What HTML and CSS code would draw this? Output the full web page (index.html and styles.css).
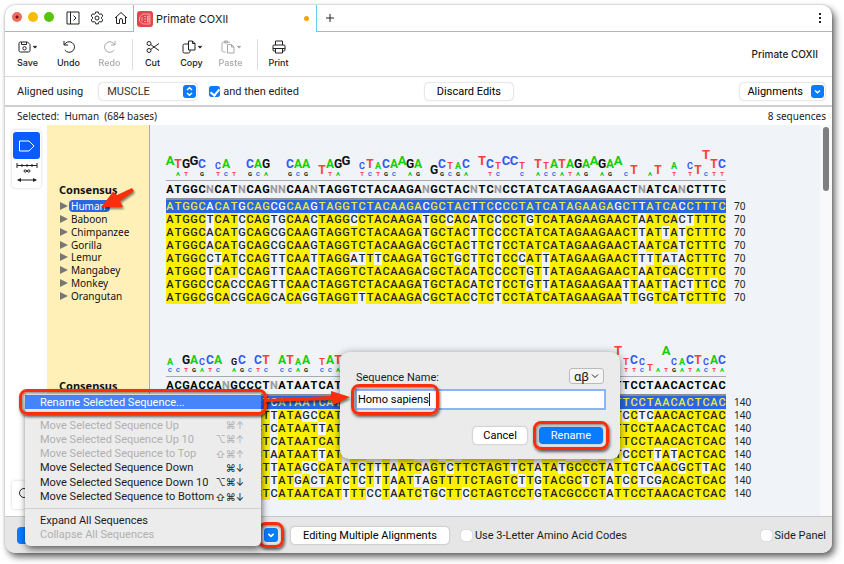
FILE: index.html
```html
<!DOCTYPE html>
<html lang="en">

<head>
    <meta charset="UTF-8">
    <meta name="viewport" content="width=device-width, initial-scale=1.0">
    <title>Primate COXII</title>
    <link rel="stylesheet" href="styles.css">
</head>

<body>
    <div class="window">
        <header class="tabs">
            <div class="lights"><i class="red"></i><i class="yellow"></i><i class="green"></i></div>
            <button class="icon_btn" aria-label="Toggle sidebar">
                <svg width="14" height="14" viewBox="0 0 14 14"><path d="M1 1h12v12H1zM4.500 1v12M7.500 4.500l2.500 2.500-2.500 2.500" /></svg>
            </button>
            <button class="icon_btn" aria-label="Settings">
                <svg width="14" height="14" viewBox="0 0 14 14"><path d="M5.700 1h2.600l.4 1.700 1.100.6 1.700-.5 1.300 2.200-1.300 1.200v1.500l1.300 1.200-1.300 2.200-1.700-.5-1.100.6-.4 1.700H5.700l-.4-1.700-1.100-.6-1.700.5-1.300-2.200 1.300-1.200V6.200L1.200 5l1.300-2.200 1.700.5 1.100-.6z" /><circle cx="7" cy="7" r="2" /></svg>
            </button>
            <button class="icon_btn" aria-label="Home">
                <svg width="14" height="14" viewBox="0 0 14 14"><path d="M1 7l6-5.500L13 7M2.500 6v6.500h3V9a1.500 1.500 0 0 1 3 0v3.500h3V6" /></svg>
            </button>
            <div class="tab">
                <svg class="tab_logo" width="16" height="16" viewBox="0 0 16 16"><rect width="16" height="16" rx="3" fill="#e0474c" stroke="none" /><path d="M6 3h7v10H6L2.500 10V6zM7 5.500h2M7 8h2M7 10.500h2M5 6v4M10.500 5h1.500v6h-1.500zM10.500 8H12" fill="none" stroke="#ffb9b6" stroke-width=".8" /></svg>
                <span>Primate COXII</span>
                <i class="unsaved"></i>
            </div>
            <button class="icon_btn new_tab" aria-label="New tab">
                <svg width="10" height="10" viewBox="0 0 10 10"><path d="M5 1v8M1 5h8" /></svg>
            </button>
            <button class="icon_btn more" aria-label="More">
                <svg width="4" height="12" viewBox="0 0 4 12"><path class="solid" d="M1 1h2v2H1zM1 5h2v2H1zM1 9h2v2H1z" /></svg>
            </button>
        </header>

        <nav class="toolbar">
            <button class="tool">
                <svg width="22" height="16" viewBox="0 0 22 16"><path d="M3.500 3h7l2.500 2.500v6a1.500 1.500 0 0 1-1.500 1.500h-8A1.500 1.500 0 0 1 2 11.500v-7A1.500 1.500 0 0 1 3.500 3zM4.500 3v2.500h5V3" /><circle cx="7.500" cy="9.300" r="1.700" /><path class="caret" d="M16.500 7L18 8.500 19.500 7" /></svg>
                Save
            </button>
            <button class="tool">
                <svg width="16" height="16" viewBox="0 0 16 16"><path d="M3 2v4h4M3.300 6a5.300 5.300 0 1 1 .5 5" /></svg>
                Undo
            </button>
            <button class="tool" disabled>
                <svg width="16" height="16" viewBox="0 0 16 16"><path d="M13 2v4H9M12.700 6a5.300 5.300 0 1 0-.5 5" /></svg>
                Redo
            </button>
            <i class="divider"></i>
            <div class="edit_tools">
                <button class="tool">
                    <svg width="16" height="16" viewBox="0 0 16 16"><circle cx="4" cy="4.500" r="2" /><circle cx="4" cy="11.500" r="2" /><path d="M5.700 5.600L14 11.500M5.700 10.400L14 4.500" /></svg>
                    Cut
                </button>
                <button class="tool">
                    <svg width="22" height="16" viewBox="0 0 22 16"><path d="M7.500 2h4L14 4.500V11H7.500zM11.500 2v2.500H14M7.500 5H3.500A1.500 1.500 0 0 0 2 6.500v6A1.500 1.500 0 0 0 3.500 14h4A1.500 1.500 0 0 0 9 12.500V11" /><path class="caret" d="M17.500 7L19 8.500 20.500 7" /></svg>
                    Copy
                </button>
                <button class="tool" disabled>
                    <svg width="22" height="16" viewBox="0 0 22 16"><path d="M7.500 5.500h4L14 8v6H7.500zM11.500 5.500V8H14M5.500 13h-2A1.500 1.500 0 0 1 2 11.500v-7A1.500 1.500 0 0 1 3.500 3h5A1.500 1.500 0 0 1 10 4M4.500 2h3v2h-3z" /><path class="caret" d="M17.500 7L19 8.500 20.500 7" /></svg>
                    Paste
                </button>
            </div>
            <i class="divider"></i>
            <button class="tool">
                <svg width="16" height="16" viewBox="0 0 16 16"><path d="M4.500 6V2h7v4M4 12H3a1 1 0 0 1-1-1V7a1 1 0 0 1 1-1h10a1 1 0 0 1 1 1v4a1 1 0 0 1-1 1h-1M4.500 9.500h7V14h-7zM2 9.500h12" /></svg>
                Print
            </button>
            <span class="doc_name">Primate COXII</span>
        </nav>

        <div class="options">
            <label for="method">Aligned using</label>
            <div class="select_wrap">
                <select id="method">
                    <option>MUSCLE</option>
                </select>
                <svg class="blue_mark" width="13" height="13" viewBox="0 0 13 13"><rect width="13" height="13" rx="3" /><path d="M4 5l2.500-2.300L9 5M4 8l2.500 2.300L9 8" /></svg>
            </div>
            <label class="check"><input type="checkbox" checked>and then edited</label>
            <button class="push discard">Discard Edits</button>
            <button class="push align_btn">Alignments
                <svg class="blue_mark" width="13" height="13" viewBox="0 0 13 13"><rect width="13" height="13" rx="3" /><path d="M4 5.500l2.500 2.300L9 5.500" /></svg>
            </button>
        </div>

        <div class="status">
            <span>Selected:&nbsp; Human&nbsp; (684 bases)</span>
            <span>8 sequences</span>
        </div>

        <main class="viewer">
            <aside class="side">
                <div class="side_card">
                    <button class="side_btn active" aria-label="Annotations">
                        <svg width="18" height="14" viewBox="0 0 18 14"><path d="M1.500 2H11l5 5-5 5H1.500z" /></svg>
                    </button>
                    <button class="side_btn" aria-label="Wrap width">
                        <svg width="22" height="22" viewBox="0 0 22 22"><path d="M1 3.500h20M1 1v5M21 1v5M6 2v3M11 2v3M16 2v3M11 9c-1-1.500-3-1.500-3 0s2 1.500 3 0 3-1.500 3 0-2 1.500-3 0M2 18h18" /><path class="solid" d="M1 18l4-2v4zM21 18l-4-2v4z" /></svg>
                    </button>
                </div>
                <button class="search_btn" aria-label="Search">
                    <svg width="14" height="14" viewBox="0 0 14 14"><circle cx="6" cy="6" r="4.500" /><path d="M9.500 9.500L13 13" /></svg>
                </button>
            </aside>
            <div class="names" id="names"></div>
            <div class="sequences" id="sequences"></div>
            <div class="scroll_track"><div class="scroll_thumb"></div></div>
        </main>

        <footer class="footer">
            <button class="blue_push" aria-label="Sequence actions"></button>
            <button class="chevron_btn framed" aria-label="Open sequence menu">
                <svg class="blue_mark" width="14" height="14" viewBox="0 0 13 13"><rect width="13" height="13" rx="3" /><path d="M4 5.500l2.500 2.300L9 5.500" /></svg>
            </button>
            <button class="push editing">Editing Multiple Alignments</button>
            <label class="check"><input type="checkbox">Use 3-Letter Amino Acid Codes</label>
            <label class="check last"><input type="checkbox">Side Panel</label>
        </footer>

        <svg class="arrow name_arrow" width="36" height="24" viewBox="0 0 36 24"><path d="M33 2L18 9l-4-3L2 21l22 0-3-6L35 5z" /></svg>

        <div class="menu" role="menu">
            <button class="menu_item selected framed" role="menuitem">Rename Selected Sequence...</button>
            <div class="menu_group moves">
                <button class="menu_item" disabled>Move Selected Sequence Up<kbd>⌘↑</kbd></button>
                <button class="menu_item" disabled>Move Selected Sequence Up 10<kbd>⌥⌘↑</kbd></button>
                <button class="menu_item" disabled>Move Selected Sequence to Top<kbd>⇧⌘↑</kbd></button>
                <button class="menu_item">Move Selected Sequence Down<kbd>⌘↓</kbd></button>
                <button class="menu_item">Move Selected Sequence Down 10<kbd>⌥⌘↓</kbd></button>
                <button class="menu_item">Move Selected Sequence to Bottom<kbd>⇧⌘↓</kbd></button>
            </div>
            <hr>
            <div class="menu_group">
                <button class="menu_item">Expand All Sequences</button>
                <button class="menu_item" disabled>Collapse All Sequences</button>
            </div>
        </div>

        <div class="dialog" role="dialog">
            <div class="dialog_top">
                <label for="seqName">Sequence Name:</label>
                <button class="greek">αβ<svg width="8" height="6" viewBox="0 0 8 6"><path d="M1 1.500l3 3 3-3" /></svg></button>
            </div>
            <div class="field">
                <input type="text" id="seqName" value="Homo sapiens">
                <i class="field_mark"></i>
            </div>
            <div class="dialog_buttons">
                <button class="push">Cancel</button>
                <button class="push primary framed">Rename</button>
            </div>
        </div>

        <svg class="arrow menu_arrow" width="90" height="20" viewBox="0 0 90 20"><path d="M1 10l66-3V2l19 6-17 8-1-5L1 13z" /></svg>
    </div>

    <script>
        var names = ["Human", "Baboon", "Chimpanzee", "Gorilla", "Lemur", "Mangabey", "Monkey", "Orangutan"];

        // size: 0 nothing, 1 tiny, 2 small, 3 medium, 4 tall
        var blocks = [
            {
                end: 70,
                consensus: "ATGGCNCATNCAGNNCAANTAGGTCTACAAGANGCTACNTCNCCTATCATAGAAGAACTNATCANCTTTC",
                logo: "ATGGCNCATNCAGNNCAANTAGGTCTACAAGANGCTACNTCTCCTATTATAGAAGAACTNATCANCTTTC",
                under: "-AT-G-TCA-GCA--GCG--TA--TCTGC-AG--GCGA--TC--C-ACCATAG-AG-C--T--T-T-CTT",
                size: "4334302310" + "3330033303" + "3340232334" + "3303322304" + "3244203233" + "3334334130" + "1302023433",
                rows: [
                    "ATGGCACATGCAGCGCAAGTAGGTCTACAAGACGCTACTTCCCCTATCATAGAAGAGCTTATCACCTTTC",
                    "ATGGCTCATCCAGTGCAACTAGGCCTACAAGATGCCACATCCCCTGTCATAGAAGAACTAATCACTTTTC",
                    "ATGGCACATGCAGCGCAAGTAGGTCTACAAGATGCTACTTCCCCTATCATAGAAGAACTTATTATCTTTC",
                    "ATGGCACATGCAGCGCAAGTAGGTCTACAAGACGCTACTTCTCCTATCATAGAAGAACTAATCATCTTTC",
                    "ATGGCCTATCCAGTTCAATTAGGATTTCAAGATGCTGCTTCTCCCATTATAGAAGAACTTTTATACTTTC",
                    "ATGGCTCATCCAGTTCAACTAGGTCTACAAGACGCTACATCCCCTGTTATAGAAGAACTAATCACCTTTC",
                    "ATGGCCCACCCAGTTCAACTAGGTCTACAAGATGCTACATCTCCTGTTATAGAAGAATTAATTACTTTCC",
                    "ATGGCGCACGCAGCACAGGTAGGTTTACAAGACGCTACCTCTCCTATCATAGAAGAATTGGTCATCTTTC"
                ]
            },
            {
                end: 140,
                consensus: "ACGACCANGCCCTNATAATCATNTTTNTNATCNGTTTTCTAGTCCTNTACGCCCTNTTCCTAACACTCAC",
                logo: "ACGACCANGCCCTNATAATTATNTTTNTNATCNGTTTTCTAGTCCTNTACGCCCTNTTCCTAACACTCAC",
                under: "CTTGATC-AG-TC-CCAG-CCA----------------------------------CTTC--TGATACTA",
                size: "2133233023" + "1330332302" + "3304000000" + "0000000000" + "0000000000" + "0000004232" + "2142233233",
                rows: [
                    "ACGACCACGCCCTCATAATCATTTTCCTTATCTGCTTCCTAGTCCTGTATGCCCTTTTCCTAACACTCAC",
                    "ACGACCACACCCTTATAGCCATATTCCTAATCAGCTTTCTAGTCCTGTACGCCCTATCCTCAACACTCAC",
                    "ACGACCACGCCCTCATAATTATTTTCCTTATCTGCTTCCTAGTCCTGTATGCCCTTTTCCTAACACTCAC",
                    "ACGACCACGCCCTCATAATCATTTTCCTTATCTGCTTCCTAGTCCTGTACGCCCTTTTCCTAACACTCAC",
                    "ATGACCATACTCTAATAATTATTTTCCTAATTAGCTCTCTAGTTCTATACATCATCTCCCTTATACTCAC",
                    "ACGACCATGCCCTTATAGCCATATCTTTAATCAGTCTTCTAGTTCTATATGCCCTATTCTCAACGCTTAC",
                    "ACAACCATACTCTTATGACTATCTCTTTAATTAGTTTTCTAGTCTTGTACGCTCTATCCTCGACACTCAC",
                    "ACGACCACGCCCTCATAATCATTTTCCTAATCTGCTTCCTAGTCCTGTACGCCCTATTCCTAACACTCAC"
                ]
            }
        ];

        function logoHtml(block) {
            var html = "";
            for (var i = 0; i < block.logo.length; i++) {
                var size = block.size[i];
                html += "<span class='stack'>";
                if (size !== "0") {
                    html += "<b class='base_" + block.logo[i] + " size_" + size + "'>" + block.logo[i] + "</b>";
                }
                if (size > 1 && block.under[i] !== "-") {
                    html += "<b class='base_" + block.under[i] + " size_1'>" + block.under[i] + "</b>";
                }
                html += "</span>";
            }
            return html;
        }

        function cellsHtml(text, consensus) {
            var html = "";
            for (var i = 0; i < text.length; i++) {
                var cls = "";
                if (consensus[i] === "N") {
                    cls = "unknown";
                } else if (text[i] === consensus[i]) {
                    cls = "match";
                }
                html += "<span class='" + cls + "'>" + text[i] + "</span>";
            }
            return html;
        }

        var namesHtml = "";
        var seqHtml = "";
        blocks.forEach(function (block) {
            namesHtml += "<section class='name_block'><h2>Consensus</h2><ul>";
            seqHtml += "<section class='seq_block'><div class='logo'>" + logoHtml(block) + "</div>";
            seqHtml += "<div class='bases consensus'>" + cellsHtml(block.consensus, block.consensus) + "</div><div class='rows'>";
            names.forEach(function (name, i) {
                var selected = i === 0 ? " selected" : "";
                namesHtml += "<li class='name" + selected + "'><i></i><span>" + name + "</span></li>";
                seqHtml += "<div class='row" + selected + "'><div class='bases'>" + cellsHtml(block.rows[i], block.consensus) + "</div><em>" + block.end + "</em></div>";
            });
            namesHtml += "</ul></section>";
            seqHtml += "</div></section>";
        });
        document.getElementById("names").innerHTML = namesHtml;
        document.getElementById("sequences").innerHTML = seqHtml;
    </script>
</body>

</html>
```

FILE: styles.css
```css
* {
    box-sizing: border-box;
}

body {
    margin: 0;
    padding: 5px 12px 11px 5px;
    height: 100vh;
    background-color: white;
    font-family: Roboto, "Liberation Sans", sans-serif;
    font-size: 11px;
    color: #1c1c1c;
    overflow: hidden;
}

button {
    border: none;
    padding: 0;
    background: none;
    font: inherit;
    color: inherit;
}

svg {
    flex: none;
    fill: none;
    stroke: #222;
    stroke-width: 1;
}

svg .solid {
    fill: #222;
    stroke: none;
}

svg .caret {
    stroke-width: 1.5;
}

.window {
    position: relative;
    height: 100%;
    display: flex;
    flex-direction: column;
    background-color: white;
    border-radius: 10px;
    box-shadow: 0 0 2px rgba(0, 0, 0, 0.3), 3px 4px 7px rgba(0, 0, 0, 0.6);
}

/* tab strip */
.tabs {
    height: 27px;
    flex: none;
    display: flex;
    align-items: stretch;
    border-bottom: 1px solid #6ecbf5;
}

.lights {
    display: flex;
    align-items: center;
    gap: 6px;
    padding: 0 7px 3px 7px;
}

.lights i {
    width: 10px;
    height: 10px;
    border-radius: 50%;
}

.lights .red {
    background: radial-gradient(circle, #7a0f0b 1px, #ee6a5f 2px);
}

.lights .yellow {
    background-color: #f5bd05;
}

.lights .green {
    background-color: #57c50a;
}

.icon_btn {
    display: flex;
    align-items: center;
    padding: 0 5px;
}

.tab {
    width: 184px;
    display: flex;
    align-items: center;
    gap: 3px;
    margin: 0 0 -1px 0;
    padding: 0 7px 0 3px;
    background-color: white;
    border-left: 1px solid #6ecbf5;
    border-right: 1px solid #6ecbf5;
    font-family: Inter, "Liberation Sans", sans-serif;
}

.unsaved {
    width: 5px;
    height: 5px;
    margin-left: auto;
    border-radius: 50%;
    background-color: #f5a300;
}

.new_tab {
    padding: 0 8px;
}

.more {
    margin-left: auto;
    padding: 0 10px;
}

/* toolbar */
.toolbar {
    height: 45px;
    flex: none;
    display: flex;
    align-items: center;
    padding: 0 14px 0 2px;
    border-bottom: 1px solid #ddd;
    font-family: Inter, "Liberation Sans", sans-serif;
    font-weight: 500;
}

.tool {
    width: 41px;
    display: flex;
    flex-direction: column;
    align-items: center;
    gap: 2px;
    font-size: 9px;
    line-height: 12px;
}

.tool:disabled {
    opacity: 0.4;
}

.edit_tools {
    display: flex;
    padding-right: 5px;
}

.edit_tools .tool {
    width: 39px;
}

.divider {
    width: 1px;
    height: 31px;
    margin-left: 2px;
    background-color: #ddd;
}

.doc_name {
    margin-left: auto;
    font-size: 10px;
}

/* options row */
.options {
    height: 30px;
    flex: none;
    display: flex;
    align-items: center;
    padding: 0 7px 0 12px;
    border-bottom: 2px solid #cfcfcf;
}

.select_wrap {
    position: relative;
    margin: 0 12px 0 16px;
}

.select_wrap select {
    width: 98px;
    height: 17px;
    padding: 0 8px;
    appearance: none;
    border: none;
    border-radius: 4px;
    background-color: white;
    box-shadow: 0 0 2px rgba(0, 0, 0, 0.35);
    font: inherit;
    color: #333;
}

.select_wrap svg {
    position: absolute;
    right: 1px;
    top: 2px;
}

.blue_mark rect {
    fill: #087bff;
    stroke: none;
}

.blue_mark path {
    stroke: white;
    stroke-width: 1.5;
}

.check {
    display: flex;
    align-items: center;
    gap: 3px;
}

.check input {
    width: 11px;
    height: 11px;
    flex: none;
    margin: 0;
    appearance: none;
    border-radius: 3px;
    background-color: white;
    box-shadow: 0 0 1px rgba(0, 0, 0, 0.4);
}

.check input:checked {
    background-color: #087bff;
}

.check input:checked::before {
    content: "";
    display: block;
    width: 4px;
    height: 7px;
    margin: 1px 0 0 3px;
    border: solid white;
    border-width: 0 2px 2px 0;
    transform: rotate(40deg);
}

.push {
    height: 17px;
    padding: 0 12px;
    border-radius: 4px;
    background-color: white;
    box-shadow: 0 0 2px rgba(0, 0, 0, 0.35);
    color: black;
}

.discard {
    margin: 0 auto 0 126px;
}

.align_btn {
    display: flex;
    align-items: center;
    gap: 8px;
    padding: 0 1px 0 7px;
}

.status {
    height: 18px;
    flex: none;
    display: flex;
    align-items: center;
    justify-content: space-between;
    padding: 0 6px 0 12px;
    font-family: "Noto Sans", sans-serif;
    font-size: 10px;
}

/* alignment viewer */
.viewer {
    flex: 1;
    min-height: 0;
    display: flex;
    overflow: hidden;
    background-color: #f0f3f8;
}

.side {
    width: 42px;
    flex: none;
    display: flex;
    flex-direction: column;
    justify-content: space-between;
    padding: 5px 0 7px 7px;
    background-color: white;
}

.side_card {
    width: 29px;
    padding: 2px 1px;
    border-radius: 4px;
    box-shadow: 0 0 3px rgba(0, 0, 0, 0.2);
}

.side_btn {
    width: 27px;
    height: 27px;
    display: flex;
    align-items: center;
    justify-content: center;
}

.side_btn.active {
    border-radius: 3px;
    background-color: #0a5cff;
}

.side_btn.active svg {
    stroke: white;
}

.search_btn {
    width: 29px;
    height: 28px;
    padding: 4px 6px;
    text-align: left;
    border-radius: 3px;
    box-shadow: 0 0 3px rgba(0, 0, 0, 0.2);
}

.names {
    width: 103px;
    flex: none;
    background-color: #fff0b8;
    border-right: 1px solid #aaa;
    font-family: "Noto Sans", sans-serif;
    font-size: 10px;
    color: #111;
}

.name_block {
    height: 196px;
    padding: 56px 0 0 12px;
}

.name_block h2 {
    height: 19px;
    margin: 0;
    font-size: 11px;
    line-height: 17px;
}

.name_block ul {
    height: 102px;
    display: grid;
    grid-template-rows: repeat(8, 1fr);
    margin: 0;
    padding: 0;
    list-style: none;
}

.name {
    display: flex;
    align-items: center;
    gap: 1px;
    line-height: 12px;
}

.name i {
    margin-left: 1px;
    border-left: 8px solid #777;
    border-top: 4px solid transparent;
    border-bottom: 4px solid transparent;
}

.name span {
    padding: 0 2px;
}

.name.selected span {
    border-radius: 4px;
    background-color: #2a66df;
    color: white;
    padding-right: 4px;
}

.sequences {
    flex: 1;
    padding-left: 16px;
}

.seq_block {
    height: 196px;
}

.logo {
    width: 560px;
    height: 56px;
    display: flex;
    padding-bottom: 3px;
    border-bottom: 1px solid #aaa;
}

.stack {
    width: 8px;
    display: flex;
    flex-direction: column;
    justify-content: flex-end;
    align-items: center;
}

.size_1 {
    font-size: 6px;
    line-height: 6px;
}

.size_2 {
    font-size: 9px;
    line-height: 9px;
}

.size_3 {
    font-size: 12px;
    line-height: 14px;
}

.size_4 {
    font-size: 13px;
    line-height: 32px;
}

.base_A {
    color: #0bd00b;
}

.base_C {
    color: #3558f0;
}

.base_G {
    color: #111;
}

.base_T {
    color: #fa4133;
}

.bases {
    display: flex;
    font-weight: 500;
    color: #222;
}

.bases span {
    width: 8px;
    text-align: center;
}

.consensus {
    width: 560px;
    height: 19px;
    line-height: 18px;
    border-bottom: 2px solid #8b8d91;
    font-weight: 700;
    color: #000;
}

.consensus .unknown {
    color: #999;
}

.rows {
    height: 102px;
    display: grid;
    grid-template-rows: repeat(8, 1fr);
}

.row {
    display: flex;
    line-height: 13px;
}

.row .match {
    background-color: #fff000;
}

.row.selected .bases {
    background-color: #2a66df;
    color: white;
}

.row.selected .match {
    background: none;
    color: #f0e83c;
}

.row em {
    margin-left: 8px;
    font-family: "Noto Sans", sans-serif;
    font-size: 10px;
    font-style: normal;
    color: #222;
}

.scroll_track {
    width: 12px;
    flex: none;
    padding: 2px 3px;
    background-color: #f9f9f9;
}

.scroll_thumb {
    height: 64px;
    border-radius: 3px;
    background-color: #7f7f7f;
}

/* bottom bar */
.footer {
    height: 37px;
    flex: none;
    display: flex;
    align-items: center;
    padding: 0 6px 0 12px;
    background-color: #e6e6e6;
    border-top: 1px solid #c8c8c8;
    border-radius: 0 0 10px 10px;
}

.blue_push {
    width: 230px;
    height: 17px;
    border-radius: 4px;
    background-color: #087bff;
}

.chevron_btn {
    height: 14px;
    margin: 0 13px 0 17px;
}

.chevron_btn svg {
    display: block;
}

.editing {
    margin-right: 12px;
}

.last {
    margin-left: auto;
}

/* red highlight frames */
.framed {
    position: relative;
}

.framed::after {
    content: "";
    position: absolute;
    inset: -6px;
    border: 3px solid #f92f0c;
    border-radius: 8px;
    box-shadow: 1px 2px 3px rgba(0, 0, 0, 0.6), inset 1px 1px 3px rgba(0, 0, 0, 0.5);
}

.arrow {
    position: absolute;
    fill: #f92f0c;
    stroke: none;
    filter: drop-shadow(1px 2px 1px rgba(0, 0, 0, 0.5));
}

.name_arrow {
    left: 94px;
    top: 181px;
}

.menu_arrow {
    left: 259px;
    top: 384px;
}

/* context menu */
.menu {
    position: absolute;
    left: 20px;
    bottom: 7px;
    width: 236px;
    padding: 1px 0 4px;
    background-color: #ececec;
    border-radius: 0 0 5px 5px;
    box-shadow: 1px 3px 7px rgba(0, 0, 0, 0.6);
}

.menu_item {
    width: 100%;
    height: 14px;
    display: flex;
    align-items: center;
    justify-content: space-between;
    padding: 0 17px 0 15px;
    text-align: left;
    white-space: nowrap;
}

.menu_item:disabled {
    color: #b0b0b0;
}

.menu_item.selected {
    background-color: #4584fb;
    color: white;
}

.menu_item kbd {
    font-family: Inter, "DejaVu Sans", sans-serif;
    font-size: 10px;
}

.menu_group {
    display: grid;
    height: 29px;
}

.menu_group.moves {
    height: 86px;
    margin-top: 9px;
}

.menu hr {
    margin: 4px 0;
    border: none;
    border-top: 1px solid #d0d0d0;
}

/* rename dialog */
.dialog {
    position: absolute;
    left: 335px;
    top: 347px;
    width: 280px;
    padding: 16px 15px 15px 16px;
    background-color: #ebebeb;
    border-radius: 9px;
    box-shadow: 0 2px 8px rgba(0, 0, 0, 0.5);
}

.dialog_top {
    display: flex;
    align-items: flex-end;
    justify-content: space-between;
    margin-bottom: 6px;
    padding-right: 1px;
}

.greek {
    height: 16px;
    display: flex;
    align-items: center;
    gap: 2px;
    padding: 0 4px;
    border: 1px solid #bbb;
    border-radius: 3px;
    background-color: #f4f4f4;
    font-size: 13px;
}

.field {
    position: relative;
}

.field input {
    width: 100%;
    height: 19px;
    display: block;
    padding: 0 1px;
    border: 1px solid #8db4fa;
    outline: 1px solid #8db4fa;
    background-color: white;
    font: inherit;
}

.field_mark {
    position: absolute;
    left: -5px;
    top: -6px;
    width: 88px;
    height: 31px;
    border: 3px solid #f92f0c;
    border-radius: 8px;
    box-shadow: 1px 2px 3px rgba(0, 0, 0, 0.6), inset 1px 1px 3px rgba(0, 0, 0, 0.5);
}

/* text cursor */
.field_mark::after {
    content: "";
    position: absolute;
    right: 6px;
    top: 6px;
    width: 1px;
    height: 13px;
    background-color: #222;
}

.dialog_buttons {
    display: flex;
    justify-content: flex-end;
    gap: 12px;
    margin-top: 18px;
    padding-right: 2px;
}

.dialog_buttons .push {
    padding: 0 10px;
}

.dialog_buttons .primary {
    padding: 0 12px;
    background-color: #087bff;
    color: white;
}
```
